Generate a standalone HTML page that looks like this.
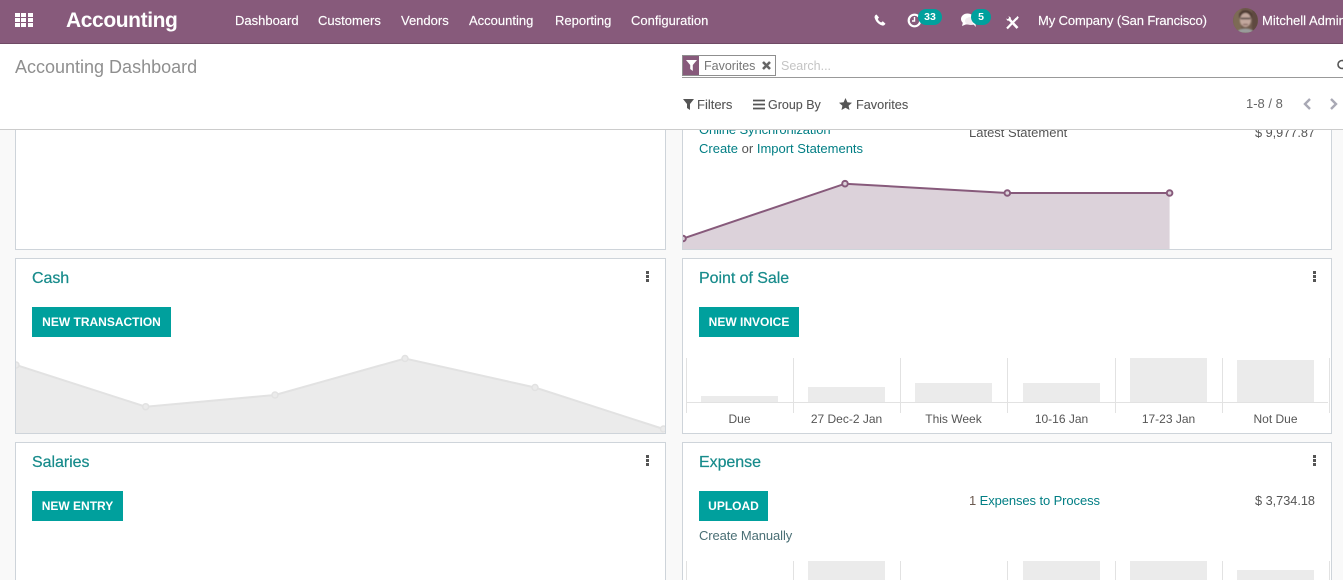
<!DOCTYPE html>
<html><head><meta charset="utf-8">
<style>
html,body{margin:0;padding:0;width:1343px;height:580px;overflow:hidden}
body{background:#f9f9f9;font-family:"Liberation Sans",sans-serif;font-size:13px;color:#4c4c4c}
#w{position:relative;width:1343px;height:580px;overflow:hidden;background:#f9f9f9}
.t{position:absolute;white-space:nowrap;line-height:16px}
.nav{color:#fff;top:13px;font-size:13px;-webkit-text-stroke:.15px #fff}
.card{position:absolute;background:#fff;border:1px solid #ced4da;box-sizing:border-box}
.title{position:absolute;white-space:nowrap;color:#178b8b;font-size:16px;line-height:20px;-webkit-text-stroke:.2px #178b8b;letter-spacing:-.05px}
.btn{position:absolute;background:#00a09d;color:#fff;font-weight:bold;font-size:12px;height:30px;line-height:31px;text-align:center;white-space:nowrap}
.teal{color:#017e84}
.dots{position:absolute;width:3px;height:11px;background:repeating-linear-gradient(#555 0 3px,transparent 3px 4px)}
.bar{position:absolute;background:#ebebeb}
.vl{position:absolute;width:1px;background:#e2e2e2}
.lbl{position:absolute;text-align:center;font-size:12px;line-height:16px;color:#555;white-space:nowrap}
</style></head>
<body>
<div id="w">
<!-- Cards -->
<div class="card" style="left:15px;top:100px;width:651px;height:150px"></div>
<div class="card" style="left:682px;top:100px;width:650px;height:150px;overflow:hidden">
<svg width="650" height="150" style="position:absolute;left:-1px;top:-1px">
<path d="M1 138.500L163 83.700L325.300 93L487.600 93V150H1Z" fill="#dcd2da"/>
<path d="M1 138.500L163 83.700L325.300 93L487.600 93" fill="none" stroke="#875a7b" stroke-width="2"/>
<g fill="#dcd2da" stroke="#875a7b" stroke-width="2"><circle cx="1" cy="138.500" r="2.800"/><circle cx="163" cy="83.700" r="2.800"/><circle cx="325.300" cy="93" r="2.800"/><circle cx="487.600" cy="93" r="2.800"/></g>
</svg>
</div>
<div class="t" style="left:699px;top:122px;font-size:13px;letter-spacing:-.1px;color:#017e84">Online Synchronization</div>
<div class="t" style="left:699px;top:141px;font-size:13px;color:#555"><span class="teal">Create</span> or <span class="teal">Import Statements</span></div>
<div class="t" style="left:969px;top:125px;font-size:13px;color:#555">Latest Statement</div>
<div class="t" style="left:1255px;top:125px;font-size:12.700px;color:#555">$ 9,977.87</div>

<div class="card" style="left:15px;top:258px;width:651px;height:176px;overflow:hidden">
<div class="title" style="left:16px;top:10px">Cash</div>
<div class="dots" style="left:630px;top:12px"></div>
<div class="btn" style="left:16px;top:48px;width:139px">NEW TRANSACTION</div>
<svg width="651" height="176" style="position:absolute;left:-1px;top:-1px">
<path d="M1 107L130.700 148.700L260 137L390 100.500L520 129.500L648.500 171V176H1Z" fill="#ebebeb"/>
<path d="M1 107L130.700 148.700L260 137L390 100.500L520 129.500L648.500 171" fill="none" stroke="#e2e2e2" stroke-width="2"/>
<g fill="#ebebeb" stroke="#e2e2e2" stroke-width="1.500"><circle cx="1" cy="107" r="3"/><circle cx="130.700" cy="148.700" r="3"/><circle cx="260" cy="137" r="3"/><circle cx="390" cy="100.500" r="3"/><circle cx="520" cy="129.500" r="3"/><circle cx="648.500" cy="171" r="3"/></g>
</svg>
</div>

<div class="card" style="left:682px;top:258px;width:650px;height:176px">
<div class="title" style="left:16px;top:10px">Point of Sale</div>
<div class="dots" style="left:630px;top:12px"></div>
<div class="btn" style="left:16px;top:48px;width:100px">NEW INVOICE</div>
<div class="bar" style="left:18px;top:137px;width:77px;height:6px"></div>
<div class="bar" style="left:125px;top:128px;width:77px;height:15px"></div>
<div class="bar" style="left:232px;top:124px;width:77px;height:19px"></div>
<div class="bar" style="left:340px;top:124px;width:77px;height:19px"></div>
<div class="bar" style="left:447px;top:99px;width:77px;height:44px"></div>
<div class="bar" style="left:554px;top:101px;width:77px;height:42px"></div>
<div style="position:absolute;left:3px;top:143px;width:642px;height:1px;background:#e2e2e2"></div>
<div class="vl" style="left:3px;top:99px;height:55px"></div>
<div class="vl" style="left:110px;top:99px;height:55px"></div>
<div class="vl" style="left:217px;top:99px;height:55px"></div>
<div class="vl" style="left:324px;top:99px;height:55px"></div>
<div class="vl" style="left:432px;top:99px;height:55px"></div>
<div class="vl" style="left:539px;top:99px;height:55px"></div>
<div class="vl" style="left:646px;top:99px;height:55px"></div>
<div class="lbl" style="left:3px;top:152px;width:107px">Due</div>
<div class="lbl" style="left:110px;top:152px;width:107px">27 Dec-2 Jan</div>
<div class="lbl" style="left:217px;top:152px;width:107px">This Week</div>
<div class="lbl" style="left:325px;top:152px;width:107px">10-16 Jan</div>
<div class="lbl" style="left:432px;top:152px;width:107px">17-23 Jan</div>
<div class="lbl" style="left:539px;top:152px;width:107px">Not Due</div>
</div>

<div class="card" style="left:15px;top:442px;width:651px;height:160px">
<div class="title" style="left:16px;top:10px">Salaries</div>
<div class="dots" style="left:630px;top:12px"></div>
<div class="btn" style="left:16px;top:48px;width:91px">NEW ENTRY</div>
</div>

<div class="card" style="left:682px;top:442px;width:650px;height:160px">
<div class="title" style="left:16px;top:10px">Expense</div>
<div class="dots" style="left:630px;top:12px"></div>
<div class="btn" style="left:16px;top:48px;width:69px">UPLOAD</div>
<div class="t" style="left:16px;top:85px;font-size:13px;letter-spacing:-.1px;color:#4a6f75">Create Manually</div>
<div class="t" style="left:286px;top:50px;font-size:13px;letter-spacing:-.1px;color:#6b5a50">1 <span class="teal">Expenses to Process</span></div>
<div class="t" style="left:572px;top:50px;font-size:12.700px;color:#555">$ 3,734.18</div>
<div class="bar" style="left:125px;top:118px;width:77px;height:30px"></div>
<div class="bar" style="left:340px;top:118px;width:77px;height:30px"></div>
<div class="bar" style="left:447px;top:118px;width:77px;height:30px"></div>
<div class="bar" style="left:554px;top:127px;width:77px;height:30px"></div>
<div class="vl" style="left:3px;top:118px;height:30px"></div>
<div class="vl" style="left:110px;top:118px;height:30px"></div>
<div class="vl" style="left:217px;top:118px;height:30px"></div>
<div class="vl" style="left:324px;top:118px;height:30px"></div>
<div class="vl" style="left:432px;top:118px;height:30px"></div>
<div class="vl" style="left:539px;top:118px;height:30px"></div>
<div class="vl" style="left:646px;top:118px;height:30px"></div>
</div>

<!-- Control panel -->
<div style="position:absolute;left:0;top:44px;width:1343px;height:86px;background:#fff;border-bottom:1px solid #ccc;box-sizing:border-box"></div>
<div class="t" style="left:15px;top:56px;font-size:18px;line-height:22px;color:#8f8f8f">Accounting Dashboard</div>

<div style="position:absolute;left:682px;top:77px;width:661px;height:1px;background:#999"></div>
<div style="position:absolute;left:682px;top:55px;width:94px;height:21px;border:1px solid #8f8f8f;box-sizing:border-box"></div>
<div style="position:absolute;left:683px;top:56px;width:16px;height:19px;background:#875a7b"></div>
<svg width="11" height="11" style="position:absolute;left:686px;top:60px"><path d="M0 0H11L6.800 5V11L4.200 9V5Z" fill="#fff"/></svg>
<div class="t" style="left:704px;top:58px;font-size:12.500px;color:#777">Favorites</div>
<svg width="11" height="11" style="position:absolute;left:761px;top:60px"><path d="M2 2L9 9M9 2L2 9" stroke="#666" stroke-width="2.600"/></svg>
<div class="t" style="left:781px;top:58px;font-size:12.500px;color:#c4c4c4">Search...</div>
<svg width="8" height="12" style="position:absolute;left:1336px;top:59px"><circle cx="6" cy="5.500" r="4" fill="none" stroke="#555" stroke-width="1.600"/></svg>

<svg width="11" height="11" style="position:absolute;left:683px;top:99px"><path d="M0 0H11L7 5V11L4 9V5Z" fill="#555"/></svg>
<div class="t" style="left:697px;top:97px;font-size:13px;color:#555;-webkit-text-stroke:.1px #555">Filters</div>
<svg width="12" height="11" style="position:absolute;left:753px;top:99px"><path d="M0 1.500H12M0 5.500H12M0 9.500H12" stroke="#555" stroke-width="1.800"/></svg>
<div class="t" style="left:768px;top:97px;font-size:12.500px;color:#555;-webkit-text-stroke:.1px #555">Group By</div>
<svg width="13" height="12" style="position:absolute;left:839px;top:98px"><path d="M6.500 0L8.400 4.200L13 4.700L9.600 7.700L10.500 12L6.500 9.800L2.500 12L3.400 7.700L0 4.700L4.600 4.200Z" fill="#555"/></svg>
<div class="t" style="left:856px;top:97px;font-size:12.700px;color:#555;-webkit-text-stroke:.1px #555">Favorites</div>
<div class="t" style="left:1246px;top:96px;font-size:13px;color:#666">1-8 / 8</div>
<svg width="10" height="12" style="position:absolute;left:1302px;top:98px"><path d="M8 1L3 6L8 11" fill="none" stroke="#a9a9b5" stroke-width="2.400"/></svg>
<svg width="10" height="12" style="position:absolute;left:1329px;top:98px"><path d="M2 1L7 6L2 11" fill="none" stroke="#a9a9b5" stroke-width="2.400"/></svg>

<!-- Navbar -->
<div style="position:absolute;left:0;top:0;width:1343px;height:44px;background:#875a7b;border-bottom:1px solid #6f4a65;box-sizing:border-box"></div>
<svg width="18" height="14" style="position:absolute;left:15px;top:13px"><g fill="#fff"><rect width="5" height="4"/><rect x="6" width="5" height="4"/><rect x="13" width="5" height="4"/><rect y="5" width="5" height="4"/><rect x="6" y="5" width="5" height="4"/><rect x="13" y="5" width="5" height="4"/><rect y="10" width="5" height="4"/><rect x="6" y="10" width="5" height="4"/><rect x="13" y="10" width="5" height="4"/></g></svg>
<div class="t" style="left:66px;top:8px;font-size:21px;line-height:26px;font-weight:bold;color:#fff;letter-spacing:-.4px">Accounting</div>
<div class="t nav" style="left:235px">Dashboard</div>
<div class="t nav" style="left:318px">Customers</div>
<div class="t nav" style="left:401px">Vendors</div>
<div class="t nav" style="left:469px">Accounting</div>
<div class="t nav" style="left:555px">Reporting</div>
<div class="t nav" style="left:631px">Configuration</div>

<svg width="12" height="12" style="position:absolute;left:874px;top:14px"><path d="M2.500 0.500L5 3.500L3.800 5C4.500 6.800 5.500 7.800 7.200 8.500L8.800 7.200L11.500 9.800C10.500 11.500 9 12 7.500 11.300C4 9.800 1.800 7.500 0.700 4C0.300 2.500 1 1 2.500 0.500Z" fill="#fff"/></svg>
<svg width="16" height="16" style="position:absolute;left:907px;top:13px"><circle cx="7.500" cy="7.500" r="5.800" fill="none" stroke="#fff" stroke-width="2.200"/><path d="M7.500 4V8H5" fill="none" stroke="#fff" stroke-width="1.400"/></svg>
<div style="position:absolute;left:918px;top:9px;width:24px;height:16px;border-radius:8px;background:#00a09d;color:#fff;font-size:10.500px;font-weight:bold;line-height:16px;text-align:center">33</div>
<svg width="18" height="15" style="position:absolute;left:960px;top:13px"><ellipse cx="7.500" cy="6" rx="6.500" ry="5.500" fill="#fff"/><ellipse cx="11" cy="8" rx="6" ry="4" fill="#f1eaef"/><path d="M3 9L2 13L7 11ZM12 10L16 14L15 9Z" fill="#fff"/></svg>
<div style="position:absolute;left:971px;top:9px;width:20px;height:16px;border-radius:8px;background:#00a09d;color:#fff;font-size:10.500px;font-weight:bold;line-height:16px;text-align:center">5</div>
<svg width="14" height="15" style="position:absolute;left:1005px;top:15px"><path d="M2 13.500L11.500 3.500" stroke="#fff" stroke-width="2.200"/><path d="M10 4L12.500 1L13.800 2.500L12 5Z" fill="#fff"/><path d="M3.500 3.500L12.500 13" stroke="#fff" stroke-width="2.600"/><path d="M1 3.500L2.500 5.800L5.500 5.500L6 2.800L3.500 1L4.300 3.500L3 4.200Z" fill="#fff"/></svg>
<div class="t nav" style="left:1038px;letter-spacing:-.12px">My Company (San Francisco)</div>
<svg width="25" height="25" style="position:absolute;left:1233px;top:8px"><defs><clipPath id="c"><circle cx="12.500" cy="12.500" r="12.500"/></clipPath><filter id="b"><feGaussianBlur stdDeviation=".7"/></filter></defs><g clip-path="url(#c)"><rect width="25" height="25" fill="#6f5a4c"/><g filter="url(#b)"><path d="M0 0H8V25H0Z" fill="#7d6a55"/><path d="M19 0H25V25H19Z" fill="#5e4a40"/><path d="M6 6C8 1 17 1 19 6V10H6Z" fill="#4d3a32"/><ellipse cx="12.500" cy="12" rx="5.500" ry="7" fill="#c2a79d"/><path d="M7.500 10.500H17.500" stroke="#463a3a" stroke-width="1.600"/><path d="M10 16.500H15" stroke="#7d5d58" stroke-width="1.200"/><path d="M4 25C5 19 20 19 21 25Z" fill="#9a9c9c"/></g></g></svg>
<div class="t nav" style="left:1262px">Mitchell Admin</div>
</div>
</body></html>
